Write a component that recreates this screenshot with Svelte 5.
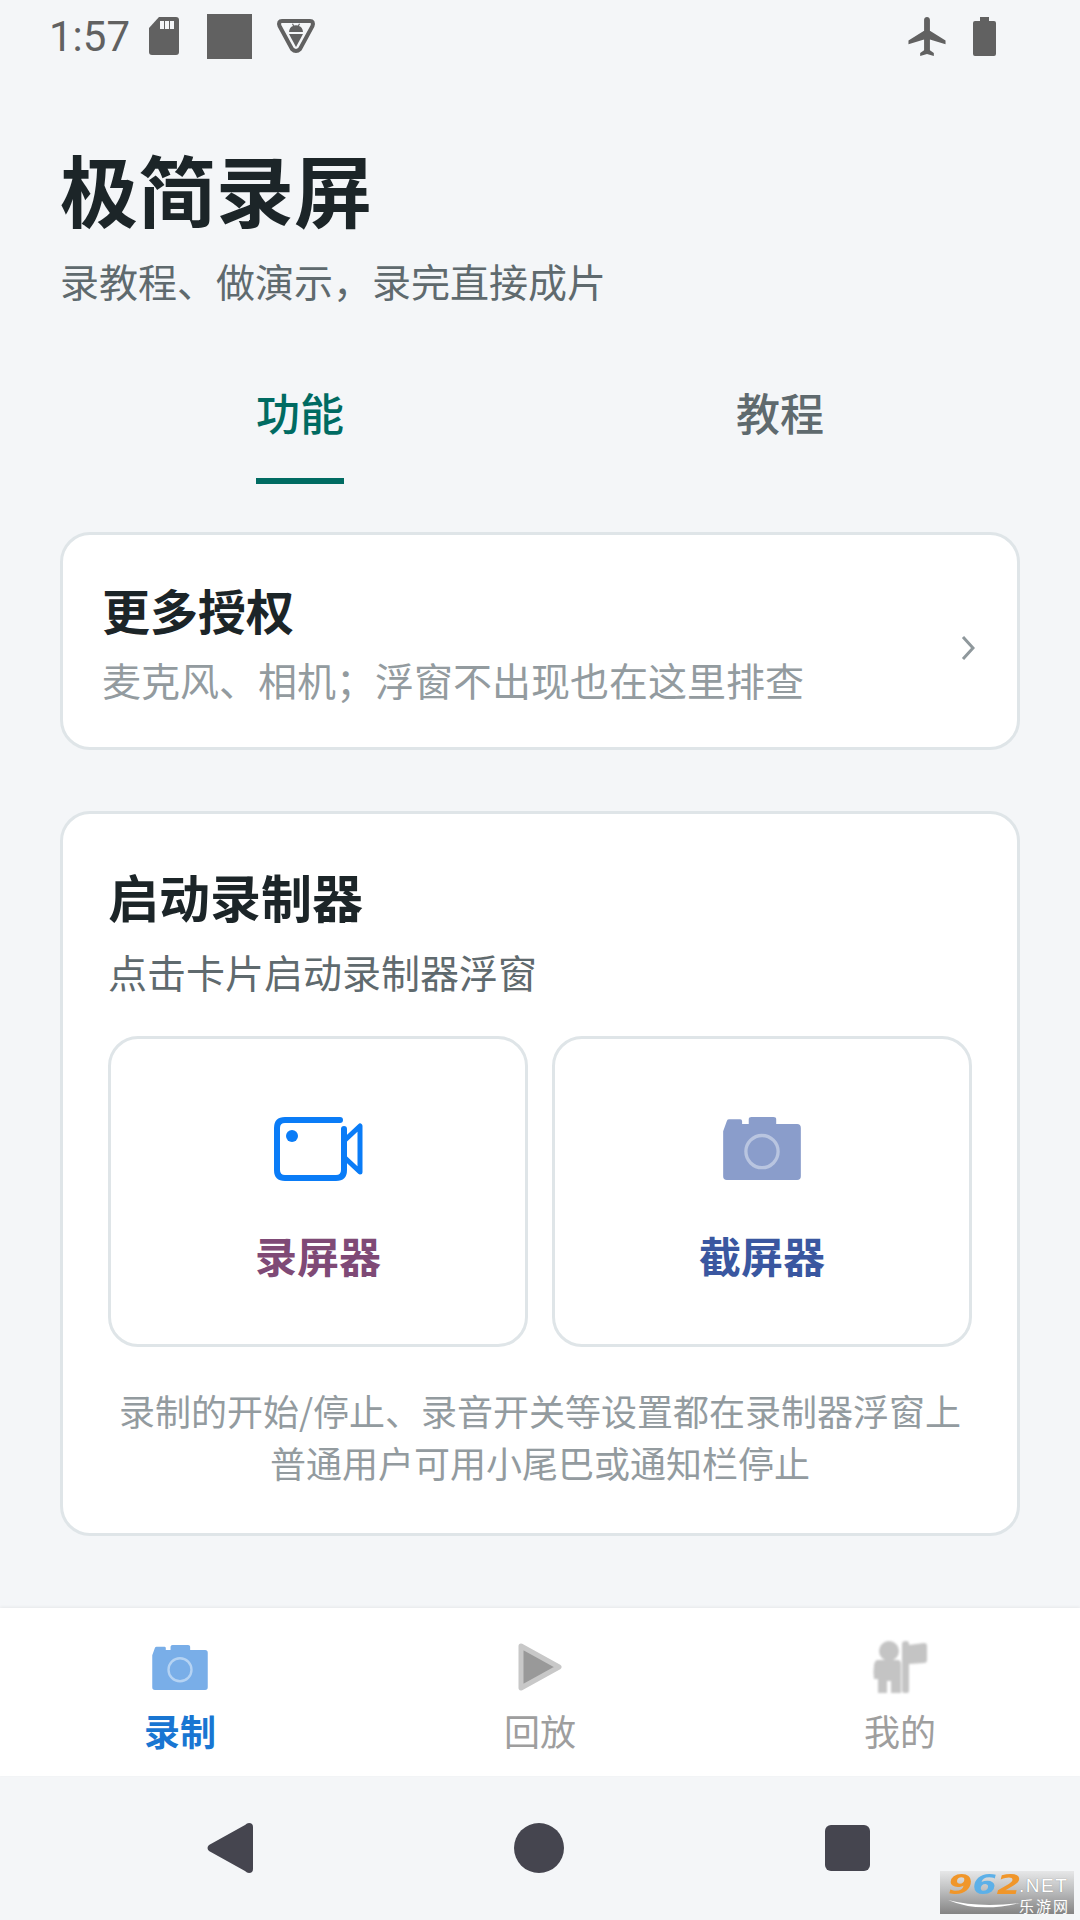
<script lang="ts">
  let activeTab = $state('功能');
  const tabs = ['功能', '教程'];
</script>

{#snippet camera(cls)}
  <svg class={cls} viewBox="0 0 164 133">
    <path class="cam-body" d="M0 30 L8 8 Q9 5 13 5 L36 5 Q40 5 40 9 L40 15 L54 15 L54 5 Q54 0 60 0 L106 0 Q112 0 112 5 L112 15 L156 15 Q164 15 164 23 L164 125 Q164 133 156 133 L8 133 Q0 133 0 125 Z" />
    <circle class="cam-ring" cx="82" cy="73" r="34" />
  </svg>
{/snippet}

<div class="page">
  <div class="status">
    <span class="time">1:57</span>
    <svg class="sd" viewBox="0 0 30 38">
      <path d="M10 0 L27 0 Q30 0 30 3 L30 35 Q30 38 27 38 L3 38 Q0 38 0 35 L0 11 Z" />
      <path class="cut" d="M11 4h4v8h-4zM16 4h4v8h-4zM21 4h4v8h-4z" />
    </svg>
    <div class="square"></div>
    <svg class="shield" viewBox="0 0 40 36">
      <path class="line" d="M6 3 H34 Q38 3 36.500 8 L24 31 Q20 35 16 31 L3.500 8 Q2 3 6 3 Z" />
      <path d="M13 14 Q13.500 9 17 8 L16 6 L17 5.500 L18 7.500 Q20 7 22 7.500 L23 5.500 L24 6 L23 8 Q26.500 9 27 14 Z" />
      <path d="M13 16 H27 L20 29 Z" />
    </svg>
    <div class="status-right">
      <svg class="plane" viewBox="2 2 19 20">
        <path d="M21 16v-2l-8-5V3.500c0-.83-.67-1.500-1.500-1.500S10 2.670 10 3.500V9l-8 5v2l8-2.500V19l-2 1.500V22l3.500-1 3.500 1v-1.500L13 19v-5.500l8 2.500z" />
      </svg>
      <svg class="battery" viewBox="0 0 23 39">
        <path d="M7 0h9v4h5q2 0 2 2v31q0 2-2 2H2q-2 0-2-2V6q0-2 2-2h5z" />
      </svg>
    </div>
  </div>

  <main class="main">
    <h1 class="title">极简录屏</h1>
    <p class="slogan">录教程、做演示&#65292;录完直接成片</p>

    <div class="tabs">
      {#each tabs as tab}
        <button class="tab" class:active={activeTab === tab} onclick={() => (activeTab = tab)}>
          <span class="tab-text">{tab}</span>
        </button>
      {/each}
    </div>

    <div class="card perm">
      <div class="perm-text">
        <div class="perm-title">更多授权</div>
        <div class="perm-sub">麦克风、相机&#65307;浮窗不出现也在这里排查</div>
      </div>
      <svg class="chevron" viewBox="0 0 14 24">
        <path d="M2 1 L12 12 L2 23" />
      </svg>
    </div>

    <div class="card recorder">
      <div class="rec-title">启动录制器</div>
      <div class="rec-sub">点击卡片启动录制器浮窗</div>
      <div class="tiles">
        <div class="tile">
          <svg class="video" viewBox="0 0 89 64">
            <path class="video-line" d="M66 3 L11 3 Q3 3 3 11 L3 53 Q3 61 11 61 L62 61 Q70 61 70 53 L70 12" />
            <path class="video-line thin" d="M70 24 L86 9 L86 55 L70 40 Z" />
            <circle class="video-dot" cx="18" cy="19" r="6" />
          </svg>
          <span class="tile-label purple">录屏器</span>
        </div>
        <div class="tile">
          {@render camera('cam-tile')}
          <span class="tile-label indigo">截屏器</span>
        </div>
      </div>
      <p class="note">录制的开始/停止、录音开关等设置都在录制器浮窗上<br />普通用户可用小尾巴或通知栏停止</p>
    </div>
  </main>

  <nav class="tabbar">
    <div class="nav-item active">
      <div class="nav-icon">{@render camera('cam-nav')}</div>
      <span>录制</span>
    </div>
    <div class="nav-item">
      <div class="nav-icon">
        <svg class="play" viewBox="0 0 44 48">
          <path d="M3 3 L41 24 L3 45 Z" />
        </svg>
      </div>
      <span>回放</span>
    </div>
    <div class="nav-item">
      <div class="nav-icon">
        <svg class="person" viewBox="0 0 54 52">
          <circle cx="16" cy="10" r="10" />
          <path d="M5 19 L25 19 Q28 19 28 24 L28 52 L18 52 L18 40 L14 40 L14 52 L5 52 L5 38 L1 38 Q0 30 1 24 Q2 19 5 19 Z" />
          <path d="M29 3 Q29 0 33 0 Q36 0 36 3 L36 4 L51 2 Q54 2 54 5 L54 19 Q54 22 51 22 L36 23 L36 50 Q36 52 33 52 Q29 52 29 50 Z" />
        </svg>
      </div>
      <span>我的</span>
    </div>
  </nav>

  <div class="sysnav">
    <svg class="sys-back" viewBox="0 0 46 50">
      <path d="M46 4 L46 46 Q46 50 42 50 Q40 50 38 48 L2 28 Q-1 25 2 22 L38 2 Q40 0 42 0 Q46 0 46 4 Z" />
    </svg>
    <div class="sys-circle"></div>
    <div class="sys-square"></div>
  </div>

  <div class="watermark">
    <span class="wm-num"><i class="o">9</i><i class="b">6</i><i class="o">2</i></span>
    <span class="wm-net">.NET</span>
    <svg class="wm-swoosh" viewBox="0 0 72 12">
      <path d="M0 1 Q30 14 72 4 Q30 9 0 1 Z" />
    </svg>
    <span class="wm-cn">乐游网</span>
  </div>
</div>

<style>
  :global(body) {
    margin: 0;
    background: #f4f6f8;
  }

  .page {
    position: relative;
    width: 1080px;
    height: 1920px;
    display: flex;
    flex-direction: column;
    background: #f4f6f8;
    overflow: hidden;
    font-family: 'Noto Sans CJK SC', 'Noto Sans', sans-serif;
    color: #1c2528;
  }

  .status {
    height: 72px;
    flex: none;
    display: flex;
    align-items: center;
    padding: 0 84px 0 49px;
    fill: #616161;
  }

  .time {
    font-family: Roboto, sans-serif;
    font-size: 42px;
    color: #616161;
    width: 100px;
  }

  .sd {
    width: 30px;
    height: 38px;
  }

  .cut {
    fill: #f4f6f8;
  }

  .square {
    width: 45px;
    height: 45px;
    margin-left: 28px;
    background: #616161;
  }

  .shield {
    width: 40px;
    height: 36px;
    margin-left: 24px;
  }

  .line {
    fill: none;
    stroke: #616161;
    stroke-width: 4;
  }

  .status-right {
    margin-left: auto;
    display: flex;
    align-items: center;
    gap: 27px;
  }

  .plane {
    width: 38px;
    height: 39px;
  }

  .battery {
    width: 23px;
    height: 39px;
  }

  .main {
    flex: 1;
    padding: 71px 60px 0;
  }

  .title {
    margin: 0;
    font-size: 78px;
    line-height: 90px;
    font-weight: 700;
    color: #1c2528;
  }

  .slogan {
    margin: 22px 0 0;
    font-size: 39px;
    line-height: 50px;
    color: #5f6a6e;
  }

  .tabs {
    display: flex;
    margin-top: 77px;
  }

  .tab {
    flex: 1;
    padding: 0;
    border: none;
    background: none;
    font-family: inherit;
    font-size: 44px;
    line-height: 60px;
    font-weight: 500;
    color: #5f6a6e;
    cursor: pointer;
  }

  .tab-text {
    display: inline-block;
    padding-bottom: 36px;
    border-bottom: 6px solid transparent;
  }

  .tab.active {
    color: #006b62;
  }

  .tab.active .tab-text {
    border-bottom-color: #006b62;
  }

  .card {
    box-sizing: border-box;
    background: #fff;
    border: 3px solid #dfe5e8;
    border-radius: 30px;
  }

  .perm {
    margin-top: 48px;
    height: 218px;
    padding: 44px 42px 0 39px;
    display: flex;
    justify-content: space-between;
    align-items: flex-start;
  }

  .perm-title {
    font-size: 48px;
    line-height: 60px;
    font-weight: 700;
    color: #1c2528;
  }

  .perm-sub {
    margin-top: 15px;
    font-size: 39px;
    line-height: 50px;
    color: #939b9f;
  }

  .chevron {
    width: 14px;
    height: 24px;
    margin-top: 57px;
    fill: none;
    stroke: #8f989c;
    stroke-width: 3;
  }

  .recorder {
    margin-top: 61px;
    height: 725px;
    padding: 52px 45px 0;
  }

  .rec-title {
    font-size: 51px;
    line-height: 60px;
    font-weight: 700;
    color: #1c2528;
  }

  .rec-sub {
    margin-top: 20px;
    font-size: 39px;
    line-height: 50px;
    color: #5f6a6e;
  }

  .tiles {
    display: grid;
    grid-template-columns: 420px 420px;
    gap: 24px;
    margin-top: 40px;
  }

  .tile {
    box-sizing: border-box;
    height: 311px;
    padding-top: 78px;
    display: flex;
    flex-direction: column;
    align-items: center;
    border: 3px solid #dfe5e8;
    border-radius: 30px;
  }

  .video {
    width: 89px;
    height: 64px;
    margin-bottom: 44px;
  }

  .video-line {
    fill: none;
    stroke: #0a7cf7;
    stroke-width: 6;
    stroke-linecap: round;
    stroke-linejoin: round;
  }

  .video-line.thin {
    stroke-width: 5;
  }

  .video-dot {
    fill: #0a7cf7;
  }

  :global(.cam-tile) {
    width: 78px;
    height: 63px;
    margin-bottom: 45px;
  }

  :global(.cam-nav) {
    width: 56px;
    height: 45px;
    filter: blur(0.5px);
  }

  .cam-tile .cam-body {
    fill: #8a9dcb;
  }

  .cam-tile .cam-ring {
    fill: none;
    stroke: #b9c5e0;
    stroke-width: 7;
  }

  .cam-nav .cam-body {
    fill: #79aee8;
  }

  .cam-nav .cam-ring {
    fill: none;
    stroke: #b5d3f3;
    stroke-width: 7;
  }

  .tile-label {
    font-size: 42px;
    line-height: 60px;
    font-weight: 700;
  }

  .purple {
    color: #7f4a76;
  }

  .indigo {
    color: #3a57a0;
  }

  .note {
    margin: 37px 0 0;
    font-size: 36px;
    line-height: 52px;
    text-align: center;
    color: #939b9f;
  }

  .tabbar {
    flex: none;
    height: 168px;
    box-sizing: border-box;
    display: grid;
    grid-template-columns: repeat(3, 360px);
    background: #fff;
    box-shadow: 0 -1px 3px rgba(0, 0, 0, 0.06);
  }

  .nav-item {
    display: flex;
    flex-direction: column;
    align-items: center;
    padding-top: 29px;
    font-size: 36px;
    line-height: 52px;
    color: #9e9e9e;
  }

  .nav-item.active {
    font-weight: 700;
    color: #1976d2;
  }

  .nav-icon {
    height: 66px;
    display: flex;
    align-items: center;
    justify-content: center;
    margin-top: -3px;
    margin-bottom: 4px;
  }

  .play {
    width: 44px;
    height: 48px;
    fill: #999;
    stroke: #c8c8c8;
    stroke-width: 5;
    stroke-linejoin: round;
  }

  .person {
    width: 54px;
    height: 52px;
    fill: #c4c4c4;
    filter: blur(1px);
  }

  .sysnav {
    flex: none;
    height: 144px;
    box-sizing: border-box;
    padding-left: 75px;
    display: grid;
    grid-template-columns: repeat(3, 309px);
    align-items: center;
    justify-items: center;
    fill: #45454f;
  }

  .sys-back {
    width: 46px;
    height: 50px;
  }

  .sys-circle {
    width: 50px;
    height: 50px;
    border-radius: 50%;
    background: #45454f;
  }

  .sys-square {
    width: 45px;
    height: 46px;
    border-radius: 6px;
    background: #45454f;
  }

  .watermark {
    position: absolute;
    left: 940px;
    top: 1871px;
    width: 134px;
    height: 43px;
    background: linear-gradient(#e6e7e8, #c2c3c4 40%, #848484);
    line-height: 1;
    color: #fff;
  }

  .wm-num {
    position: absolute;
    left: 8px;
    top: 0;
    font-family: 'DejaVu Sans', sans-serif;
    font-size: 27px;
    font-weight: 700;
    transform: scaleX(1.3);
    transform-origin: left top;
  }

  .wm-num i {
    font-style: italic;
  }

  .o {
    color: #f0962a;
  }

  .b {
    color: #5cb0e8;
  }

  .wm-net {
    position: absolute;
    left: 79px;
    top: 5px;
    font-family: 'Liberation Sans', sans-serif;
    font-size: 19px;
    letter-spacing: 1.500px;
    color: #fff;
    text-shadow: 0 0 1px #777;
  }

  .wm-swoosh {
    position: absolute;
    left: 8px;
    top: 28px;
    width: 72px;
    height: 12px;
    fill: #fff;
  }

  .wm-cn {
    position: absolute;
    left: 79px;
    top: 27px;
    font-size: 15px;
    letter-spacing: 2px;
  }
</style>
